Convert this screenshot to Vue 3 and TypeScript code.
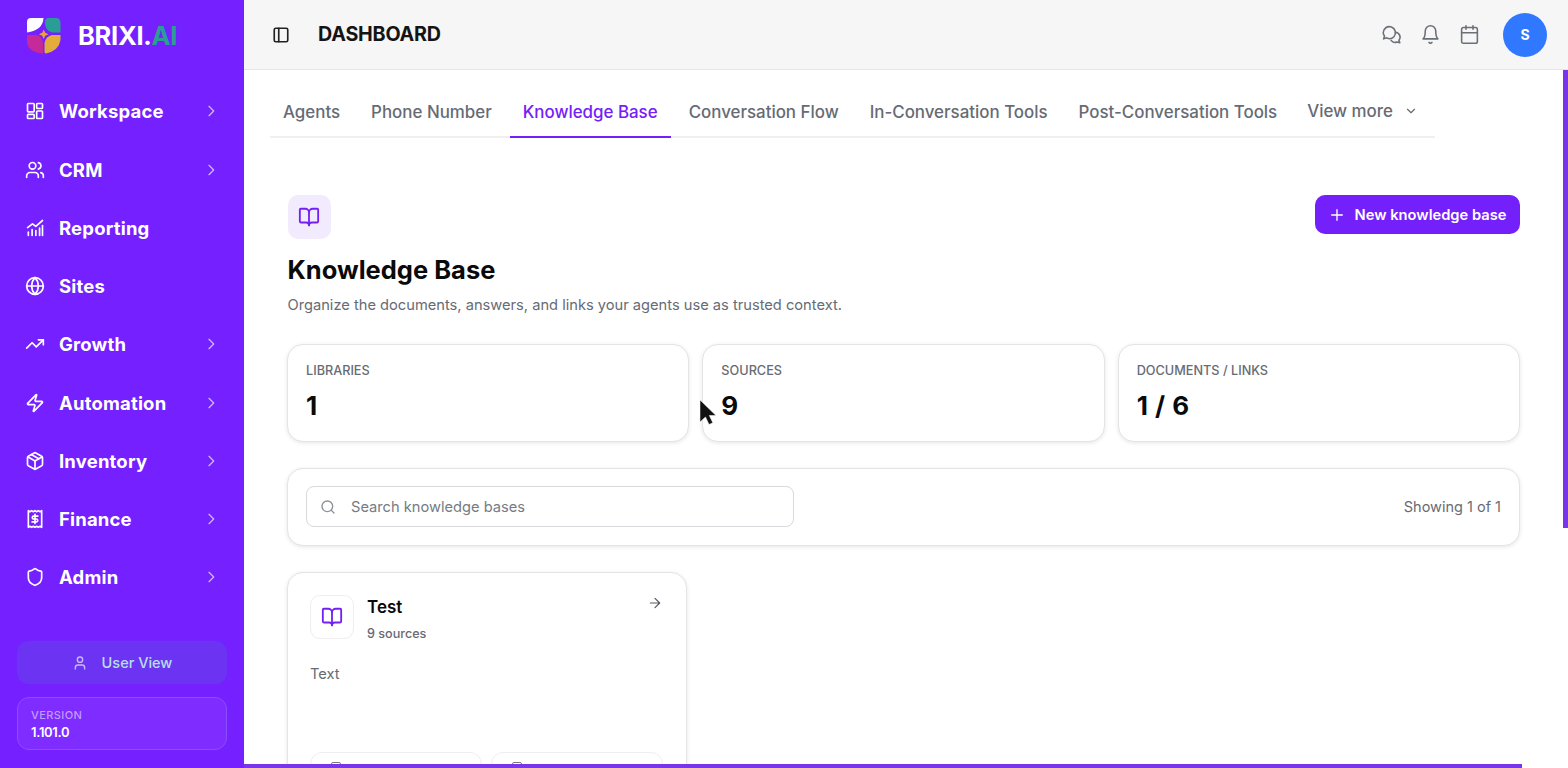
<template>
  <div class="app">
    <aside class="sidebar">
      <div class="brand">
        <svg class="logo" width="38" height="38" viewBox="0 0 38 38">
          <path d="M2 6Q2 2 6 2H18.500Q18 14 2 16.500z" fill="#fff" />
          <path d="M22.500 2H31Q35.500 2 35.500 7V16.500H27Q20 15 20 6Q20 3 22.500 2z" fill="#2a9d96" />
          <path d="M2 19H12Q18 21 18 28V37.500Q2 36 2 25z" fill="#c62a9a" />
          <path d="M35.500 19V24Q34 34.500 21 37.500Q19.500 37.500 19.500 35.500V27Q21 20 27 19z" fill="#e3ad3c" />
          <path d="M18.700 13.500l1.500 3.300 3.300 1.500-3.300 1.500-1.500 3.300-1.500-3.300-3.300-1.500 3.300-1.500z" fill="#e8a43a" />
        </svg>
        <span class="brand-name">BRIXI.<em>AI</em></span>
      </div>

      <nav class="nav">
        <a v-for="item in navItems" :key="item.label" class="nav-item">
          <svg class="nav-icon" viewBox="0 0 24 24" fill="none" stroke="currentColor" stroke-width="2" stroke-linecap="round" stroke-linejoin="round">
            <path v-for="(d, i) in item.paths" :key="i" :d="d" />
          </svg>
          <span class="nav-label">{{ item.label }}</span>
          <svg v-if="item.arrow" class="nav-chevron" viewBox="0 0 24 24" fill="none" stroke="currentColor" stroke-width="2" stroke-linecap="round" stroke-linejoin="round">
            <path d="m9 5 7 7-7 7" />
          </svg>
        </a>
      </nav>

      <div class="user-view">
        <svg width="16" height="16" viewBox="0 0 24 24" fill="none" stroke="#cdb6fb" stroke-width="2" stroke-linecap="round" stroke-linejoin="round">
          <path d="M19 21v-2a4 4 0 0 0-4-4H9a4 4 0 0 0-4 4v2" />
          <circle cx="12" cy="7" r="4" />
        </svg>
        <span>User View</span>
      </div>
      <div class="version">
        <span class="version-label">VERSION</span>
        <span class="version-num">1.101.0</span>
      </div>
    </aside>

    <div class="page">
      <header class="topbar">
        <svg class="panel-icon" width="18" height="18" viewBox="0 0 24 24" fill="none" stroke="#222" stroke-width="2.200" stroke-linecap="round" stroke-linejoin="round">
          <rect x="3" y="3" width="18" height="18" rx="2" />
          <path d="M9 3v18" />
        </svg>
        <h1 class="crumb">DASHBOARD</h1>
        <div class="top-actions">
          <svg width="21" height="21" viewBox="0 0 24 24" fill="none" stroke="#6b7078" stroke-width="1.800" stroke-linecap="round" stroke-linejoin="round">
            <path d="M2.500 10a7 7 0 1 1 12.300 4.600 7 7 0 0 1-8.300 1.200L3 17l1-3.200A7 7 0 0 1 2.500 10z" />
            <path d="M16.500 9.500a5.500 5.500 0 0 1 4 9l1 3-3.300-1a5.500 5.500 0 0 1-6.700-1.800" />
          </svg>
          <svg width="21" height="21" viewBox="0 0 24 24" fill="none" stroke="#6b7078" stroke-width="1.800" stroke-linecap="round" stroke-linejoin="round">
            <path d="M6 8a6 6 0 0 1 12 0c0 7 2.500 9 2.500 9h-17S6 15 6 8" />
            <path d="M10.300 21a1.900 1.900 0 0 0 3.400 0" />
          </svg>
          <svg width="21" height="21" viewBox="0 0 24 24" fill="none" stroke="#6b7078" stroke-width="1.800" stroke-linecap="round" stroke-linejoin="round">
            <rect x="3" y="4" width="18" height="18" rx="2" />
            <path d="M16 2v4M8 2v4M3 10h18" />
          </svg>
          <div class="avatar">S</div>
        </div>
      </header>

      <main class="main">
        <div class="tabs">
          <a v-for="tab in tabs" :key="tab" class="tab" :class="{ active: tab === 'Knowledge Base' }">{{ tab }}</a>
          <a class="tab more">
            View more
            <svg width="14" height="14" viewBox="0 0 24 24" fill="none" stroke="currentColor" stroke-width="2" stroke-linecap="round" stroke-linejoin="round">
              <path d="m6 9 6 6 6-6" />
            </svg>
          </a>
        </div>

        <section class="content">
          <div class="head">
            <div>
              <div class="icon-tile">
                <svg width="22" height="22" viewBox="0 0 24 24" fill="none" stroke="#7420f5" stroke-width="2" stroke-linecap="round" stroke-linejoin="round">
                  <path d="M12 7v14" />
                  <path d="M3 18a1 1 0 0 1-1-1V4a1 1 0 0 1 1-1h5a4 4 0 0 1 4 4 4 4 0 0 1 4-4h5a1 1 0 0 1 1 1v13a1 1 0 0 1-1 1h-6a3 3 0 0 0-3 3 3 3 0 0 0-3-3z" />
                </svg>
              </div>
              <h2 class="title">Knowledge Base</h2>
              <p class="subtitle">Organize the documents, answers, and links your agents use as trusted context.</p>
            </div>
            <button class="new-btn">
              <svg width="16" height="16" viewBox="0 0 24 24" fill="none" stroke="currentColor" stroke-width="2" stroke-linecap="round">
                <path d="M4 12h16M12 4v16" />
              </svg>
              New knowledge base
            </button>
          </div>

          <div class="stats">
            <div v-for="stat in stats" :key="stat.label" class="stat">
              <span class="stat-label">{{ stat.label }}</span>
              <span class="stat-value">{{ stat.value }}</span>
            </div>
          </div>

          <div class="search-card">
            <div class="search">
              <svg width="16" height="16" viewBox="0 0 24 24" fill="none" stroke="#8a8f98" stroke-width="2" stroke-linecap="round" stroke-linejoin="round">
                <circle cx="11" cy="11" r="8" />
                <path d="m21 21-4.300-4.300" />
              </svg>
              <span>Search knowledge bases</span>
            </div>
            <span class="showing">Showing 1 of 1</span>
          </div>

          <div class="kb-card">
            <div class="kb-head">
              <div class="kb-icon">
                <svg width="22" height="22" viewBox="0 0 24 24" fill="none" stroke="#7420f5" stroke-width="2" stroke-linecap="round" stroke-linejoin="round">
                  <path d="M12 7v14" />
                  <path d="M3 18a1 1 0 0 1-1-1V4a1 1 0 0 1 1-1h5a4 4 0 0 1 4 4 4 4 0 0 1 4-4h5a1 1 0 0 1 1 1v13a1 1 0 0 1-1 1h-6a3 3 0 0 0-3 3 3 3 0 0 0-3-3z" />
                </svg>
              </div>
              <div class="kb-info">
                <span class="kb-name">Test</span>
                <span class="kb-count">9 sources</span>
              </div>
              <svg class="kb-arrow" width="16" height="16" viewBox="0 0 24 24" fill="none" stroke="#555a62" stroke-width="1.800" stroke-linecap="round" stroke-linejoin="round">
                <path d="M5 12h14M12 5l7 7-7 7" />
              </svg>
            </div>
            <p class="kb-text">Text</p>
            <div class="kb-chips">
              <div class="chip"><span class="chip-icon"></span></div>
              <div class="chip"><span class="chip-icon"></span></div>
            </div>
          </div>
        </section>

        <div class="scroll-v"></div>
        <div class="scroll-h"></div>
        <svg class="cursor" width="18" height="28" viewBox="0 0 18 28">
          <path d="M1 1v22l5.500-5 3.500 7.500 3.800-1.800-3.500-7.200H17z" fill="#111" stroke="#fff" stroke-width="0.500" />
        </svg>
      </main>
    </div>
  </div>
</template>

<script setup lang="ts">
interface NavItem {
  label: string;
  arrow: boolean;
  paths: string[];
}

const navItems: NavItem[] = [
  {
    label: 'Workspace',
    arrow: true,
    paths: [
      'M4 3h6a1 1 0 0 1 1 1v8a1 1 0 0 1-1 1H4a1 1 0 0 1-1-1V4a1 1 0 0 1 1-1z',
      'M15 3h5a1 1 0 0 1 1 1v4a1 1 0 0 1-1 1h-5a1 1 0 0 1-1-1V4a1 1 0 0 1 1-1z',
      'M15 12h5a1 1 0 0 1 1 1v7a1 1 0 0 1-1 1h-5a1 1 0 0 1-1-1v-7a1 1 0 0 1 1-1z',
      'M4 16h6a1 1 0 0 1 1 1v3a1 1 0 0 1-1 1H4a1 1 0 0 1-1-1v-3a1 1 0 0 1 1-1z'
    ]
  },
  {
    label: 'CRM',
    arrow: true,
    paths: [
      'M16 21v-2a4 4 0 0 0-4-4H6a4 4 0 0 0-4 4v2',
      'M13 7a4 4 0 1 1-8 0 4 4 0 0 1 8 0z',
      'M22 21v-2a4 4 0 0 0-3-3.900',
      'M16 3.100a4 4 0 0 1 0 7.800'
    ]
  },
  {
    label: 'Reporting',
    arrow: false,
    paths: ['M3 11.500 9 7l4 3 8-7', 'M4 21v-4', 'M8.500 21v-7', 'M13 21v-6', 'M17.500 21v-9', 'M21 21V9']
  },
  {
    label: 'Sites',
    arrow: false,
    paths: [
      'M22 12a10 10 0 1 1-20 0 10 10 0 0 1 20 0z',
      'M12 2a14.500 14.500 0 0 0 0 20 14.500 14.500 0 0 0 0-20',
      'M2 12h20'
    ]
  },
  {
    label: 'Growth',
    arrow: true,
    paths: ['M22 7l-8.500 8.500-5-5L2 17', 'M16 7h6v6']
  },
  {
    label: 'Automation',
    arrow: true,
    paths: [
      'M4 14a1 1 0 0 1-.8-1.600l9.900-10.200a.5.5 0 0 1 .9.500l-1.900 6A1 1 0 0 0 13 10h7a1 1 0 0 1 .8 1.600l-9.900 10.200a.5.5 0 0 1-.9-.5l1.900-6A1 1 0 0 0 11 14z'
    ]
  },
  {
    label: 'Inventory',
    arrow: true,
    paths: [
      'M21 8a2 2 0 0 0-1-1.700l-7-4a2 2 0 0 0-2 0l-7 4A2 2 0 0 0 3 8v8a2 2 0 0 0 1 1.700l7 4a2 2 0 0 0 2 0l7-4a2 2 0 0 0 1-1.700z',
      'M3.300 7 12 12l8.700-5',
      'M12 22V12',
      'M7.500 4.300l9 5.100'
    ]
  },
  {
    label: 'Finance',
    arrow: true,
    paths: [
      'M4 2v20l2-1.300 2 1.300 2-1.300 2 1.300 2-1.300 2 1.300 2-1.300 2 1.300V2l-2 1.300L16 2l-2 1.300L12 2l-2 1.300L8 2 6 3.300z',
      'M15.500 8.500H10.500a1.750 1.750 0 0 0 0 3.500h3a1.750 1.750 0 0 1 0 3.500H8.500',
      'M12 6.500v11'
    ]
  },
  {
    label: 'Admin',
    arrow: true,
    paths: [
      'M20 13c0 5-3.500 7.500-7.700 9a1 1 0 0 1-.7 0C7.500 20.500 4 18 4 13V6a1 1 0 0 1 1-1c2 0 4.500-1.200 6.200-2.700a1.200 1.200 0 0 1 1.600 0C14.500 3.800 17 5 19 5a1 1 0 0 1 1 1z'
    ]
  }
];

const tabs: string[] = [
  'Agents',
  'Phone Number',
  'Knowledge Base',
  'Conversation Flow',
  'In-Conversation Tools',
  'Post-Conversation Tools'
];

const stats = [
  { label: 'LIBRARIES', value: '1' },
  { label: 'SOURCES', value: '9' },
  { label: 'DOCUMENTS / LINKS', value: '1 / 6' }
];
</script>

<style>
html,
body {
  margin: 0;
  overflow: hidden;
}
</style>

<style scoped>
.app {
  display: flex;
  width: 1568px;
  height: 768px;
  overflow: hidden;
  font-family: Inter, "Liberation Sans", sans-serif;
  background: #fff;
  color: #0a0a0a;
}

.sidebar {
  width: 244px;
  flex: none;
  box-sizing: border-box;
  padding: 13px 17px 18px;
  background: #7420ff;
  display: flex;
  flex-direction: column;
}

.brand {
  display: flex;
  align-items: center;
  gap: 15px;
  padding-left: 8px;
  height: 44px;
}

.logo {
  flex: none;
}

.brand-name {
  font-size: 25.500px;
  font-weight: 700;
  color: #fff;
  letter-spacing: -0.3px;
}

.brand-name em {
  font-style: normal;
  color: #2a9d96;
}

.nav {
  margin-top: 33.800px;
  display: flex;
  flex-direction: column;
  gap: 17.250px;
}

.nav-item {
  display: flex;
  align-items: center;
  height: 41px;
  padding-left: 8px;
  color: #fff;
}

.nav-icon {
  width: 20px;
  height: 20px;
  flex: none;
}

.nav-label {
  margin-left: 14px;
  font-size: 18.500px;
  font-weight: 650;
  letter-spacing: 0.18px;
  flex: 1;
}

.nav-chevron {
  width: 16px;
  height: 16px;
  margin-right: 8px;
  color: #cdb6fb;
}

.user-view {
  margin-top: auto;
  height: 43px;
  border-radius: 12px;
  background: #6c34f2;
  display: flex;
  align-items: center;
  justify-content: center;
  gap: 14px;
  font-size: 14.500px;
  font-weight: 500;
  color: #b4e0e8;
}

.version {
  margin-top: 13px;
  height: 53px;
  box-sizing: border-box;
  border: 1px solid #8c4dff;
  border-radius: 12px;
  background: #7e2cff;
  padding: 0 13px;
  display: flex;
  flex-direction: column;
  justify-content: center;
  gap: 2px;
}

.version-label {
  font-size: 11px;
  font-weight: 500;
  letter-spacing: 0.4px;
  color: #c39bff;
}

.version-num {
  font-size: 13px;
  font-weight: 600;
  letter-spacing: -0.3px;
  color: #fff;
}

.page {
  flex: 1;
  min-width: 0;
  display: flex;
  flex-direction: column;
}

.topbar {
  height: 70px;
  flex: none;
  box-sizing: border-box;
  border-bottom: 1px solid #e6e6e6;
  background: #f6f6f6;
  display: flex;
  align-items: center;
  padding: 0 21px 0 28px;
}

.crumb {
  margin: 0 0 2px 28px;
  font-size: 19.700px;
  font-weight: 700;
  letter-spacing: -0.2px;
  color: #141414;
}

.top-actions {
  margin-left: auto;
  display: flex;
  align-items: center;
  gap: 18px;
}

.avatar {
  width: 44px;
  height: 44px;
  margin-left: 5px;
  border-radius: 50%;
  background: #2f78ff;
  color: #fff;
  font-size: 14px;
  font-weight: 700;
  display: flex;
  align-items: center;
  justify-content: center;
}

.main {
  flex: 1;
  min-height: 0;
  position: relative;
  overflow: hidden;
}

.tabs {
  width: 1165px;
  height: 68px;
  margin-left: 26px;
  box-sizing: border-box;
  border-bottom: 2px solid #efeff1;
  display: flex;
  align-items: flex-end;
  gap: 5px;
}

.tab {
  height: 50px;
  margin-bottom: -2px;
  box-sizing: border-box;
  padding: 0 13px;
  border-bottom: 2px solid transparent;
  display: flex;
  align-items: center;
  gap: 11px;
  font-size: 16.900px;
  font-weight: 500;
  color: #666b74;
  white-space: nowrap;
}

.tab.active {
  color: #7420fa;
  border-bottom-color: #7420fa;
}

.tab.more {
  margin-left: -1px;
  transform: translateY(-1px);
}

.content {
  padding: 57px 48px 0 43px;
}

.head {
  display: flex;
  justify-content: space-between;
  align-items: flex-start;
}

.icon-tile {
  width: 43px;
  height: 44px;
  margin-left: 0.700px;
  border-radius: 10px;
  background: #f2ebfe;
  display: flex;
  align-items: center;
  justify-content: center;
}

.title {
  margin: 14px 0 0 0.500px;
  font-size: 25.500px;
  line-height: 34px;
  font-weight: 700;
  color: #0a0a0a;
}

.subtitle {
  margin: 8px 0 0 0.500px;
  font-size: 14.660px;
  line-height: 20px;
  color: #666b74;
}

.new-btn {
  height: 39px;
  width: 205px;
  box-sizing: border-box;
  border: 0;
  border-radius: 10px;
  background: #7420fa;
  color: #fff;
  font-family: inherit;
  font-size: 14.700px;
  font-weight: 600;
  display: flex;
  align-items: center;
  justify-content: center;
  gap: 10px;
}

.stats {
  margin-top: 29px;
  display: grid;
  grid-template-columns: repeat(3, 1fr);
  gap: 13px;
}

.stat,
.search-card,
.kb-card {
  box-sizing: border-box;
  background: #fff;
  border: 1px solid #e4e4e6;
  border-radius: 16px;
  box-shadow: 0 1px 4px rgba(0, 0, 0, 0.1);
}

.stat {
  height: 98px;
  padding: 18px 18px 0;
  display: flex;
  flex-direction: column;
}

.stat-label {
  font-size: 12.700px;
  line-height: 16px;
  font-weight: 500;
  color: #666b74;
}

.stat-value {
  margin-top: 11px;
  font-size: 26px;
  line-height: 32px;
  font-weight: 700;
  word-spacing: 1px;
  color: #0a0a0a;
}

.search-card {
  margin-top: 26px;
  height: 78px;
  padding: 0 18px 1px;
  display: flex;
  align-items: center;
  justify-content: space-between;
}

.search {
  width: 488px;
  height: 41px;
  box-sizing: border-box;
  border: 1px solid #d9d9dd;
  border-radius: 8px;
  padding-left: 13px;
  display: flex;
  align-items: center;
  gap: 15px;
  font-size: 14.660px;
  color: #767b84;
}

.showing {
  font-size: 14.500px;
  color: #666b74;
}

.kb-card {
  margin-top: 26px;
  width: 400px;
  height: 260px;
  padding: 22px 22px 0;
}

.kb-head {
  display: flex;
  align-items: flex-start;
}

.kb-icon {
  width: 44px;
  height: 44px;
  flex: none;
  box-sizing: border-box;
  border: 1px solid #eeeef0;
  border-radius: 10px;
  display: flex;
  align-items: center;
  justify-content: center;
}

.kb-info {
  margin-left: 13px;
  display: flex;
  flex-direction: column;
  flex: 1;
}

.kb-name {
  font-size: 17px;
  line-height: 24px;
  font-weight: 600;
  color: #0a0a0a;
}

.kb-count {
  margin-top: 6px;
  font-size: 12.600px;
  line-height: 18px;
  font-weight: 500;
  color: #666b74;
}

.kb-arrow {
  margin-right: 1px;
}

.kb-text {
  margin: 21px 0 0;
  font-size: 14.660px;
  line-height: 20px;
  color: #666b74;
}

.kb-chips {
  margin-top: 68px;
  display: flex;
  gap: 9px;
}

.chip {
  width: 172px;
  height: 60px;
  box-sizing: border-box;
  border: 1px solid #eeeef0;
  border-radius: 12px;
  padding: 9px 0 0 20px;
}

.chip-icon {
  display: block;
  width: 10px;
  height: 10px;
  box-sizing: border-box;
  border: 1.500px solid #777;
  border-radius: 2px;
}

.scroll-v {
  position: absolute;
  top: 0;
  right: 0;
  width: 5px;
  height: 458px;
  background: #7a35e8;
}

.scroll-h {
  position: absolute;
  left: 0;
  bottom: 0;
  width: 1278px;
  height: 4px;
  background: #7a35e8;
}

.cursor {
  position: absolute;
  left: 455px;
  top: 329px;
}
</style>
